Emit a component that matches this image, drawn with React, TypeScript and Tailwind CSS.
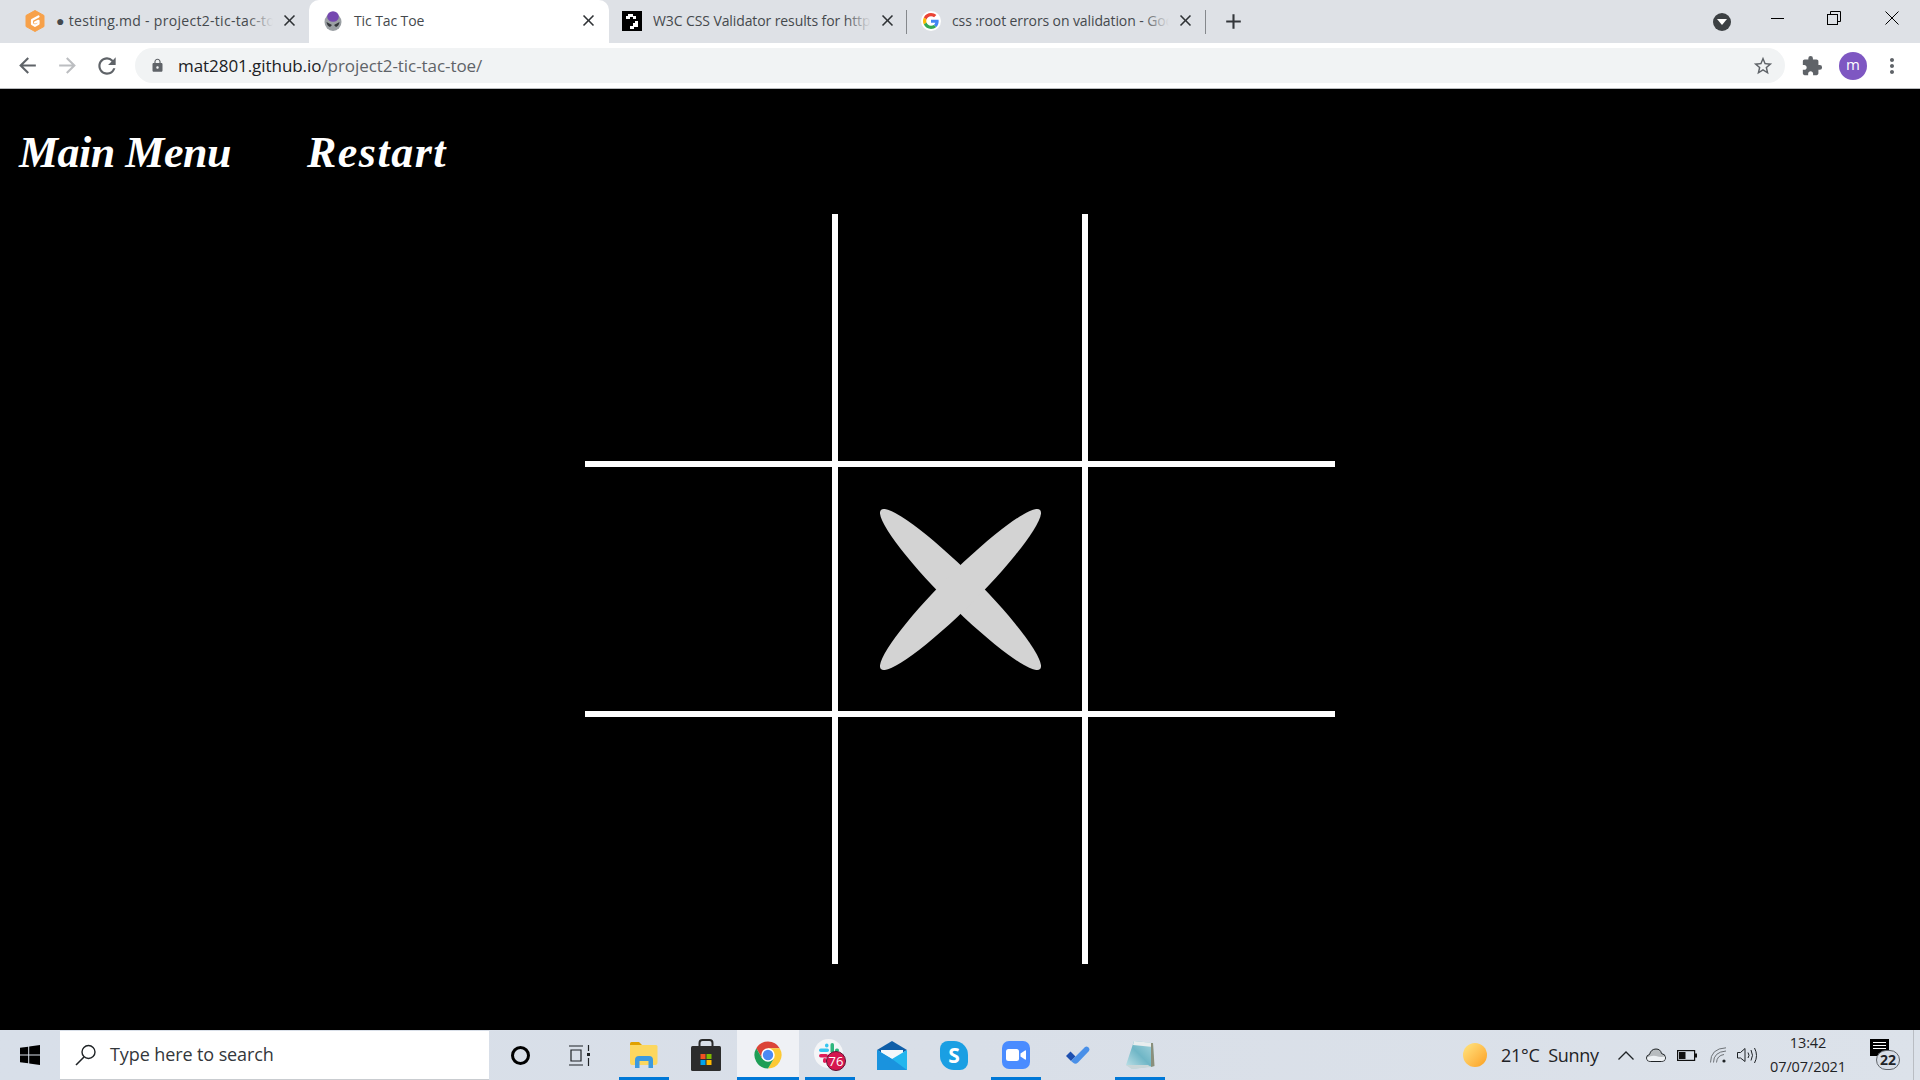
import React from 'react';
import { MdArrowBack, MdArrowForward, MdRefresh, MdLock, MdStarBorder, MdMoreVert, MdClose, MdAdd, MdExtension } from 'react-icons/md';

// favicons
const GitpodIcon = () => (
  <svg width="20" height="22" viewBox="0 0 20 22">
    <path d="M10 0.5 L19 5.5 V16.5 L10 21.5 L1 16.5 V5.5 Z" fill="#f7a14a" stroke="#f7a14a" strokeLinejoin="round" />
    <path d="M13.5 6.5 L7 10 V14 L10 15.8 L13.5 13.8 V10.8 L10 12.6" fill="none" stroke="#fff" strokeWidth="2.2" strokeLinecap="round" strokeLinejoin="round" />
  </svg>
);

const TicTacToeIcon = () => (
  <svg width="18" height="20" viewBox="0 0 18 20">
    <ellipse cx="9" cy="11" rx="8.5" ry="9" fill="#9a9fa3" />
    <ellipse cx="9" cy="5.5" rx="5.8" ry="5.3" fill="#7548b0" />
    <path d="M2.5 11 L8 14 L6 16 Q3 15 2.5 11 Z M15.5 11 L10 14 L12 16 Q15 15 15.5 11 Z" fill="#33363a" />
  </svg>
);

const W3cIcon = () => (
  <svg width="20" height="20" viewBox="0 0 20 20">
    <rect width="20" height="20" fill="#000" />
    <path d="M6 3 H11 V5 H14 V8 H11 V6 H8 V8 H4 V5 H6 Z M13 10 H16 V16 H12 V18 H8 V15 H11 V12 H13 Z" fill="#fff" />
  </svg>
);

const GoogleG = ({ size }: { size: number }) => (
  <svg width={size} height={size} viewBox="0 0 48 48">
    <path fill="#EA4335" d="M24 9.5c3.54 0 6.71 1.22 9.21 3.6l6.85-6.85C35.9 2.38 30.47 0 24 0 14.62 0 6.51 5.38 2.56 13.22l7.98 6.19C12.43 13.72 17.74 9.5 24 9.5z" />
    <path fill="#4285F4" d="M46.98 24.55c0-1.57-.15-3.09-.38-4.55H24v9.02h12.94c-.58 2.96-2.26 5.48-4.78 7.18l7.73 6c4.51-4.18 7.09-10.36 7.09-17.65z" />
    <path fill="#FBBC05" d="M10.53 28.59c-.48-1.45-.76-2.99-.76-4.59s.27-3.14.76-4.59l-7.98-6.19C.92 16.46 0 20.12 0 24c0 3.88.92 7.54 2.56 10.78l7.97-6.19z" />
    <path fill="#34A853" d="M24 48c6.48 0 11.93-2.13 15.89-5.81l-7.73-6c-2.15 1.45-4.92 2.3-8.16 2.3-6.26 0-11.57-4.22-13.47-9.91l-7.98 6.19C6.51 42.62 14.62 48 24 48z" />
  </svg>
);

// taskbar icons
const ExplorerIcon = () => (
  <svg width="28" height="26" viewBox="0 0 28 26">
    <path d="M0 1.5 Q0 0 1.5 0 H9 L12 3 H0 Z" fill="#e0a100" />
    <path d="M0 3 H26 Q27.5 3 27.5 4.5 V20 Q27.5 23 25 23 H2 Q0 23 0 20 Z" fill="#fcd75f" />
    <path d="M5 26 V18 Q5 14 9 14 H19 Q23 14 23 18 V26 H18.5 V19 H9.5 V26 Z" fill="#3c9ae0" />
  </svg>
);

const StoreIcon = () => (
  <svg width="30" height="32" viewBox="0 0 30 32">
    <path d="M8.5 9 V4 Q8.5 1 11.5 1 H18.5 Q21.5 1 21.5 4 V9" fill="none" stroke="#2a2a2a" strokeWidth="2" />
    <rect y="7" width="30" height="25" rx="1.5" fill="#2c2c2c" />
    <rect x="9.5" y="15" width="5" height="5" fill="#f25022" />
    <rect x="15.5" y="15" width="5" height="5" fill="#7fba00" />
    <rect x="9.5" y="21" width="5" height="5" fill="#00a4ef" />
    <rect x="15.5" y="21" width="5" height="5" fill="#ffb900" />
  </svg>
);

const ChromeIcon = () => (
  <svg width="28" height="28" viewBox="0 0 28 28">
    <path d="M14 14 L8.15 17.4 L2.3 7.25 A13.5 13.5 0 0 1 25.7 7.25 H14 Z" fill="#db4437" />
    <path d="M14 14 L14 7.25 H25.7 A13.5 13.5 0 0 1 14 27.5 L19.85 17.4 Z" fill="#fcc934" />
    <path d="M14 14 L19.85 17.4 L14 27.5 A13.5 13.5 0 0 1 2.3 7.25 L8.15 17.4 Z" fill="#1e9e56" />
    <circle cx="14" cy="14" r="6.75" fill="#fff" />
    <circle cx="14" cy="14" r="5.2" fill="#4a8af4" />
  </svg>
);

const SlackIcon = () => (
  <div className="relative w-[32px] h-[32px]">
    <svg width="29" height="29" viewBox="0 0 29 29" className="absolute left-0 top-0">
      <circle cx="14.5" cy="14.5" r="14.5" fill="#f4f5f7" />
      <rect x="5" y="9.5" width="10" height="3.5" rx="1.75" fill="#36c5f0" />
      <rect x="11" y="4.5" width="3.5" height="4" rx="1.75" fill="#36c5f0" />
      <rect x="16.5" y="4" width="3.5" height="10" rx="1.75" fill="#2eb67d" />
      <rect x="21" y="9.5" width="4" height="3.5" rx="1.75" fill="#2eb67d" />
      <rect x="5" y="15" width="9" height="3.5" rx="1.75" fill="#e01e5a" />
      <rect x="9" y="19" width="3.5" height="5" rx="1.75" fill="#e01e5a" />
    </svg>
    <div className="absolute left-[12px] top-[12px] w-[20px] h-[20px] rounded-full bg-[#d6164f] border border-[#5e1030] flex items-center justify-center text-white text-[13px] leading-none font-['Open_Sans',sans-serif]">76</div>
  </div>
);

const MailIcon = () => (
  <svg width="30" height="29" viewBox="0 0 30 29">
    <path d="M0 9 L15 0 L30 9 L15 18 Z" fill="#0f5ea8" />
    <path d="M4 9 H26 V15 L15 21 L4 15 Z" fill="#f4f8fb" />
    <path d="M0 9 L15 18 L30 9 V29 H0 Z" fill="#23b6ee" />
    <path d="M0 9 L15 18 L0 29 Z M15 18 L30 29 H0 Z" fill="#1a93de" />
  </svg>
);

const SkypeIcon = () => (
  <div className="w-[28px] h-[29px] rounded-[14px] rounded-tl-[8px] rounded-br-[8px] bg-[#1a9fe3] flex items-center justify-center text-white font-bold text-[21px] leading-none font-['Open_Sans',sans-serif]">S</div>
);

const ZoomIcon = () => (
  <div className="w-[28px] h-[28px] rounded-[7px] bg-[#4a8cff] flex items-center justify-center">
    <svg width="20" height="12" viewBox="0 0 20 12">
      <rect width="13" height="12" rx="2.5" fill="#fff" />
      <path d="M14.5 4.5 L19 1.5 Q20 1 20 2 V10 Q20 11 19 10.5 L14.5 7.5 Z" fill="#fff" />
    </svg>
  </div>
);

const TodoIcon = () => (
  <svg width="24" height="20" viewBox="0 0 24 20">
    <path d="M0 11 L4.5 6.5 L9.5 11.5 L5 16 Z" fill="#1d4fb0" />
    <path d="M5 16 L19 2 Q20.5 0.8 22 2 L23 3 Q24 4.5 23 6 L12 17.5 Q9.5 19.8 7.5 18 Z" fill="#4a90e8" />
  </svg>
);

const NotepadIcon = () => (
  <svg width="29" height="30" viewBox="0 0 29 30">
    <defs>
      <linearGradient id="padSheet" x1="0" y1="1" x2="1" y2="0">
        <stop offset="0" stopColor="#c5e4ea" />
        <stop offset="0.5" stopColor="#6fb6c6" />
        <stop offset="1" stopColor="#a9d6df" />
      </linearGradient>
    </defs>
    <path d="M8 1 L27 3 L28 26 L6 29 L0 25 Z" fill="url(#padSheet)" />
    <path d="M8 1 L27 3 L27 7 L7 5 Z" fill="#e8edee" />
    <path d="M25 3 L27 3 L28.5 26 L25 27 Z" fill="#8a8f7c" />
    <path d="M0 25 L6 29 L25 27 L22 25 Z" fill="#c9d6d8" />
  </svg>
);

const Tab = ({ icon, title, width, tracking, bullet }: { icon: React.ReactNode; title: string; width: string; tracking: string; bullet?: boolean }) => (
  <div className={`relative flex items-center h-[43px] pb-[2px] shrink-0 ${width}`}>
    <div className="w-[20px] h-[22px] flex items-center justify-center shrink-0">{icon}</div>
    <div className={`relative flex-1 ml-[11px] overflow-hidden whitespace-nowrap text-[14px] text-[#45494d] ${tracking}`}>
      {bullet && <span>● </span>}
      {title}
      <div className="absolute right-0 top-0 bottom-0 w-[26px] bg-gradient-to-r from-transparent to-[#dee1e6]" />
    </div>
    <MdClose className="shrink-0 ml-[7px] text-[#2f3235]" size={19} />
  </div>
);

const TaskSlot = ({ children, open, active }: { children: React.ReactNode; open?: boolean; active?: boolean }) => (
  <div className={`relative w-[62px] h-[50px] flex items-center justify-center shrink-0 ${active ? 'bg-[#eff1f5]' : ''}`}>
    {children}
    {open && <div className={`absolute bottom-0 h-[3px] bg-[#0078d7] ${active ? 'inset-x-0 w-full' : 'w-[50px]'}`} />}
  </div>
);

export default function App() {
  return (
    <div className="w-[1920px] h-[1080px] flex flex-col overflow-hidden bg-black font-['Open_Sans',sans-serif]">
      {/* tab strip */}
      <div className="h-[43px] shrink-0 bg-[#dee1e6] flex items-center">
        <div className="w-[25px] shrink-0" />
        <Tab icon={<GitpodIcon />} title="testing.md - project2-tic-tac-toe" width="w-[274px]" tracking="tracking-[0.3px]" bullet />
        <div className="w-[10px] shrink-0" />
        <div className="pl-[14px] pr-[11px] pb-[2px] w-[300px] shrink-0 bg-white rounded-t-[10px] h-[43px] flex items-center">
          <div className="w-[20px] flex justify-center shrink-0"><TicTacToeIcon /></div>
          <div className="flex-1 ml-[11px] text-[14px] text-[#45494d] tracking-[-0.1px] whitespace-nowrap">Tic Tac Toe</div>
          <MdClose className="shrink-0 text-[#2f3235]" size={19} />
        </div>
        <div className="w-[13px] shrink-0" />
        <Tab icon={<W3cIcon />} title="W3C CSS Validator results for http" width="w-[275px]" tracking="tracking-[-0.1px]" />
        <div className="w-[1px] h-[24px] bg-[#85888c] shrink-0 mx-[9px]" />
        <div className="w-[5px] shrink-0" />
        <Tab icon={<div className="w-[20px] h-[20px] rounded-full bg-white flex items-center justify-center"><GoogleG size={16} /></div>} title="css :root errors on validation - Google" width="w-[274px]" tracking="tracking-[-0.1px]" />
        <div className="w-[1px] h-[24px] bg-[#85888c] shrink-0 ml-[10px]" />
        <MdAdd className="ml-[15px] text-[#33363a]" size={25} />
        <div className="flex-1" />
        <div className="w-[18px] h-[18px] rounded-full bg-[#3c4043] flex items-center justify-center">
          <div className="w-0 h-0 border-l-[5px] border-r-[5px] border-t-[6px] border-l-transparent border-r-transparent border-t-white" />
        </div>
        <div className="w-[40px] shrink-0" />
        <div className="w-[13px] h-[1px] bg-black shrink-0 -mt-[7px]" />
        <div className="w-[43px] shrink-0" />
        <svg width="14" height="14" viewBox="0 0 14 14" className="shrink-0 -mt-[7px]">
          <path d="M3.5 3 V0.5 H13.5 V10.5 H11" fill="none" stroke="#000" />
          <rect x="0.5" y="3.5" width="10" height="10" fill="none" stroke="#000" />
        </svg>
        <div className="w-[44px] shrink-0" />
        <svg width="14" height="14" viewBox="0 0 14 14" className="shrink-0 -mt-[7px]">
          <path d="M0.5 0.5 L13.5 13.5 M13.5 0.5 L0.5 13.5" stroke="#000" fill="none" />
        </svg>
        <div className="w-[21px] shrink-0" />
      </div>

      {/* toolbar */}
      <div className="h-[46px] shrink-0 bg-white border-b border-[#b8babd] flex items-center">
        <MdArrowBack className="ml-[15px] text-[#5f6368]" size={25} />
        <MdArrowForward className="ml-[15px] text-[#bcbec1]" size={25} />
        <MdRefresh className="ml-[14px] text-[#5f6368]" size={26} />
        <div className="ml-[15px] w-[1650px] h-[35px] rounded-full bg-[#f1f3f4] flex items-center pl-[15px] pr-[11px]">
          <MdLock className="text-[#5f6368]" size={15} />
          <div className="ml-[13px] text-[17px] tracking-[-0.06px] text-[#202124] whitespace-nowrap">
            mat2801.github.io<span className="text-[#5f6368]">/project2-tic-tac-toe/</span>
          </div>
          <div className="flex-1" />
          <MdStarBorder className="text-[#5f6368]" size={22} />
        </div>
        <MdExtension className="ml-[16px] text-[#5f6368]" size={22} />
        <div className="ml-[16px] w-[28px] h-[28px] rounded-full bg-[#7e57c2] flex items-center justify-center text-white text-[15px] leading-none pb-[2px]">m</div>
        <MdMoreVert className="ml-[13px] text-[#5f6368]" size={24} />
      </div>

      {/* page */}
      <div className="flex-1 bg-black flex flex-col">
        <nav className="h-[125px] shrink-0 flex items-start pt-[36px] pl-[19px] gap-[76px] text-white text-[44px] leading-[56px] font-bold italic font-['Liberation_Serif',serif]">
          <a className="block tracking-[-0.5px]">Main Menu</a>
          <a className="block tracking-[1.5px]">Restart</a>
        </nav>
        <div className="mx-auto grid grid-cols-[250px_250px_250px] grid-rows-[250px_250px_250px]">
          <div className="border-r-[3px] border-b-[3px] border-white" />
          <div className="border-x-[3px] border-b-[3px] border-white" />
          <div className="border-l-[3px] border-b-[3px] border-white" />
          <div className="border-r-[3px] border-y-[3px] border-white" />
          <div className="relative border-[3px] border-white flex items-center justify-center">
            <div className="absolute w-[225px] h-[35px] rounded-[50%] bg-[#d3d3d3] rotate-45" />
            <div className="absolute w-[225px] h-[35px] rounded-[50%] bg-[#d3d3d3] -rotate-45" />
          </div>
          <div className="border-l-[3px] border-y-[3px] border-white" />
          <div className="border-r-[3px] border-t-[3px] border-white" />
          <div className="border-x-[3px] border-t-[3px] border-white" />
          <div className="border-l-[3px] border-t-[3px] border-white" />
        </div>
      </div>

      {/* taskbar */}
      <div className="h-[50px] shrink-0 bg-gradient-to-r from-[#d8dfe9] via-[#d9dfe8] to-[#dce2ea] flex items-center text-[#1f2326]">
        <div className="w-[60px] shrink-0 flex justify-center">
          <svg width="20" height="20" viewBox="0 0 20 20">
            <path d="M0 2.8 L8.2 1.7 V9.4 H0 Z M9.2 1.5 L20 0 V9.4 H9.2 Z M0 10.5 H8.2 V18.3 L0 17.2 Z M9.2 10.5 H20 V20 L9.2 18.5 Z" fill="#000" />
          </svg>
        </div>
        <div className="w-[429px] h-[49px] shrink-0 bg-white border-b border-[#c9ccd0] flex items-center pl-[15px]">
          <svg width="22" height="22" viewBox="0 0 22 22">
            <circle cx="13.5" cy="8" r="6.5" fill="none" stroke="#1f2326" strokeWidth="1.4" />
            <path d="M9 13 L1 21" stroke="#1f2326" strokeWidth="1.6" />
          </svg>
          <span className="ml-[13px] text-[18px] tracking-[-0.1px] text-[#33373b]">Type here to search</span>
        </div>
        <TaskSlot>
          <div className="w-[19px] h-[19px] rounded-full border-[3px] border-black" />
        </TaskSlot>
        <TaskSlot>
          <svg width="21" height="21" viewBox="0 0 21 21" fill="none" stroke="#1f2326" strokeWidth="1.2" className="-ml-[5px]">
            <path d="M0 1 H14 M0 20 H14 M2 5 H12 V16 H2 Z M19.5 0 V6 M19.5 13 V21" />
            <rect x="18" y="8" width="3" height="3" fill="#1f2326" stroke="none" />
          </svg>
        </TaskSlot>
        <TaskSlot open><ExplorerIcon /></TaskSlot>
        <TaskSlot><StoreIcon /></TaskSlot>
        <TaskSlot open active><ChromeIcon /></TaskSlot>
        <TaskSlot open><SlackIcon /></TaskSlot>
        <TaskSlot><MailIcon /></TaskSlot>
        <TaskSlot><SkypeIcon /></TaskSlot>
        <TaskSlot open><ZoomIcon /></TaskSlot>
        <TaskSlot><TodoIcon /></TaskSlot>
        <TaskSlot open><NotepadIcon /></TaskSlot>
        <div className="flex-1" />

        {/* tray */}
        <div className="w-[24px] h-[24px] rounded-full bg-gradient-to-br from-[#ffe680] to-[#fb9f12] shrink-0" />
        <span className="ml-[14px] w-[117px] text-[18px] tracking-[-0.3px] whitespace-pre shrink-0">21°C  Sunny</span>
        <svg width="16" height="9" viewBox="0 0 16 9" className="shrink-0">
          <path d="M0.5 8.5 L8 1 L15.5 8.5" fill="none" stroke="#1f2326" strokeWidth="1.3" />
        </svg>
        <svg width="20" height="14" viewBox="0 0 20 14" className="ml-[12px] shrink-0">
          <path d="M4.5 13.5 Q0.5 13.5 0.5 10 Q0.5 7 3.5 6.5 Q5 1 10 1 Q14.5 1 15.5 5.5 Q19.5 6 19.5 10 Q19.5 13.5 15.5 13.5 Z" fill="#b8bcbf" stroke="#1f2326" />
          <path d="M1 9.5 Q6 7 10 8 Q15 9.5 19 8.5 L19 10 Q19 13 15.5 13 H4.5 Q1 13 1 9.5 Z" fill="#eef1f4" />
        </svg>
        <svg width="20" height="11" viewBox="0 0 20 11" className="ml-[11px] shrink-0">
          <rect x="0.6" y="0.6" width="17" height="9.8" fill="none" stroke="#111" strokeWidth="1.2" />
          <rect x="2" y="2" width="6.5" height="7" fill="#111" />
          <rect x="18" y="3.5" width="2" height="4" fill="#111" />
        </svg>
        <svg width="17" height="16" viewBox="0 0 17 16" className="ml-[13px] shrink-0" fill="none" stroke="#6d7176" strokeWidth="1">
          <path d="M0.5 15.5 Q0.5 1.5 16 0.8" />
          <path d="M3.5 15.5 Q3.5 5 16 4" />
          <path d="M6.5 15.5 Q7 8.5 14 7.5" />
          <circle cx="14" cy="14" r="1.6" fill="#1f2326" stroke="none" />
        </svg>
        <svg width="21" height="17" viewBox="0 0 21 17" className="ml-[10px] shrink-0" fill="none" stroke="#1f2326" strokeWidth="1">
          <path d="M0.5 5.5 H3.5 L8 1.5 V14.5 L3.5 11 H0.5 Z" />
          <path d="M11 5.5 Q13 8.5 11 11" />
          <path d="M14 3 Q17 8.5 14 13.5" />
          <path d="M17.5 1 Q21.5 8.5 17.5 16" />
        </svg>
        <div className="w-[100px] shrink-0 text-center text-[14.5px] leading-[24px] tracking-[-0.1px]">
          <div>13:42</div>
          <div>07/07/2021</div>
        </div>
        <div className="relative w-[32px] h-[32px] ml-[10px] shrink-0">
          <div className="absolute left-[2px] top-0 w-[19px] h-[17px] bg-black flex flex-col gap-[2px] items-center pt-[3px]">
            <div className="w-[13px] h-[1px] bg-white" />
            <div className="w-[13px] h-[1px] bg-white" />
            <div className="w-[13px] h-[1px] bg-white" />
          </div>
          <div className="absolute left-[8px] top-[11px] w-[24px] h-[20px] rounded-full bg-[#d7dde6] border border-[#5f6368] flex items-center justify-center text-[14px] font-bold leading-none">22</div>
        </div>
        <div className="ml-[13px] w-[1px] h-[50px] bg-[#b9bdc3] shrink-0" />
        <div className="w-[6px] shrink-0" />
      </div>
    </div>
  );
}
